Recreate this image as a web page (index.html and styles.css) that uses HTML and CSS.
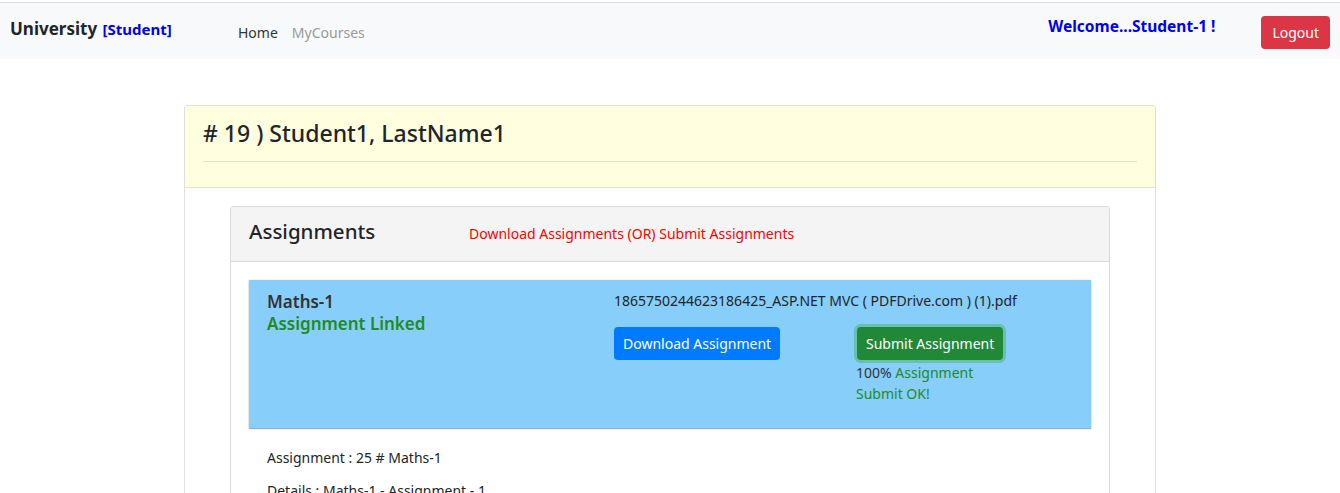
FILE: index.html
```html
<!DOCTYPE html>
<html>
<head>
<meta charset="utf-8">
<link rel="stylesheet" href="styles.css">
</head>
<body>
<nav class="navbar">
  <div class="brand">University <span class="role">[Student]</span></div>
  <ul class="nav-links">
    <li><a class="nav-link active" href="#">Home</a></li>
    <li><a class="nav-link" href="#">MyCourses</a></li>
  </ul>
  <div class="welcome">Welcome...Student-1 !</div>
  <button class="btn btn-logout">Logout</button>
</nav>

<main class="main">
  <section class="card">
    <header class="card-header">
      <h2 class="student-title"># 19 ) Student1, LastName1</h2>
      <hr class="rule">
    </header>
    <div class="card-body">
      <section class="inner-card">
        <header class="inner-header">
          <h3 class="inner-title">Assignments</h3>
          <span class="hint">Download Assignments (OR) Submit Assignments</span>
        </header>
        <div class="inner-body">
          <div class="assign-box">
            <div class="assign-left">
              <div class="subject">Maths-1</div>
              <div class="linked">Assignment Linked</div>
            </div>
            <div class="assign-right">
              <div class="filename">1865750244623186425_ASP.NET MVC ( PDFDrive.com ) (1).pdf</div>
              <div class="actions">
                <div class="action-col">
                  <button class="btn btn-download">Download Assignment</button>
                </div>
                <div class="action-col submit-col">
                  <button class="btn btn-submit">Submit Assignment</button>
                  <div class="status"><span class="pct">100%</span> Assignment Submit OK!</div>
                </div>
              </div>
            </div>
          </div>
          <p class="detail">Assignment : 25 # Maths-1</p>
          <p class="detail detail-next">Details : Maths-1 - Assignment - 1</p>
        </div>
      </section>
    </div>
  </section>
</main>
</body>
</html>
```
FILE: styles.css
```css
* { box-sizing: border-box; }
html, body { margin: 0; padding: 0; background: #fff; }
body {
  font-family: "Noto Sans", "Open Sans", sans-serif;
  color: #212529;
  font-size: 14px;
  padding-top: 2px;
}
.navbar {
  display: flex;
  align-items: center;
  height: 57px;
  background: #f8f9fa;
  border-top: 1px solid #dcdcdc;
  padding: 0 10px;
}
.brand {
  font-size: 17px;
  font-weight: 700;
  color: #212529;
  width: 228px;
  margin-top: -6px;
  white-space: nowrap;
}
.role { color: #0000ee; font-size: 15px; margin-left: 1px; }
.nav-links {
  list-style: none;
  display: flex;
  gap: 14px;
  margin: 0;
  padding: 0;
  margin-top: 2px;
}
.nav-link {
  text-decoration: none;
  color: #999;
  font-size: 14px;
}
.nav-link.active { color: #333; }
.welcome {
  margin-left: auto;
  margin-right: 46px;
  color: #0000ee;
  font-weight: 700;
  font-size: 15.5px;
  margin-top: -10px;
}
.btn {
  display: block;
  font-family: inherit;
  border: 0;
  border-radius: 4px;
  color: #fff;
  font-size: 14px;
  padding: 0 9px;
  height: 33px;
  white-space: nowrap;
  cursor: pointer;
}
.btn-logout { background: #dc3545; margin-top: 2px; padding: 0 11px; }

.main { padding-top: 46px; display: flex; justify-content: center; }
.card {
  width: 972px;
  border: 1px solid #dfdfdf;
  border-radius: 3px;
  background: #fff;
}
.card-header {
  background: #ffffe0;
  border-bottom: 1px solid #e2e2cc;
  padding: 12px 18px 25px;
}
.student-title {
  margin: 0;
  font-size: 23px;
  font-weight: 500;
  line-height: 30px;
  color: #212529;
}
.rule {
  border: 0;
  border-top: 1px solid #e4e4cc;
  margin: 13px 0 0;
}
.card-body { padding: 18px 45px; }
.inner-card {
  border: 1px solid #dadada;
  border-radius: 3px;
}
.inner-header {
  background: #f4f4f4;
  border-bottom: 1px solid #dadada;
  height: 55px;
  display: flex;
  align-items: center;
  padding: 0 18px;
}
.inner-title {
  margin: 0;
  font-size: 20.5px;
  font-weight: 500;
  width: 220px;
  margin-top: -6px;
}
.hint { color: #ff0000; font-size: 14px; margin-top: -1px; }
.inner-body { padding: 18px 18px 0; }
.assign-box {
  background: #87cefa;
  height: 148px;
  display: flex;
  padding: 11px 18px;
  box-shadow: 0 1px 1px rgba(60, 90, 120, 0.45), 0 0 2px rgba(0, 0, 0, 0.15);
}
.assign-left { width: 347px; }
.subject { font-size: 17px; font-weight: 600; color: #333; line-height: 22px; }
.linked { font-size: 17px; font-weight: 600; color: #228b22; line-height: 22px; }
.filename { font-size: 14px; line-height: 20px; }
.actions { display: flex; margin-top: 16px; }
.action-col { width: 242px; }
.submit-col { width: 148px; }
.btn-download { background: #007bff; }
.btn-submit {
  background: #218838;
  box-shadow: 0 0 0 3px rgba(72, 180, 97, 0.5);
  margin-left: 1px;
}
.status {
  color: #228b22;
  font-size: 14px;
  line-height: 21px;
  margin-top: 2px;
}
.pct { color: #333; }
.detail { margin: 0; padding-left: 18px; font-size: 14px; line-height: 20px; margin-top: 20px; }
.detail-next { margin-top: 13px; }
```
